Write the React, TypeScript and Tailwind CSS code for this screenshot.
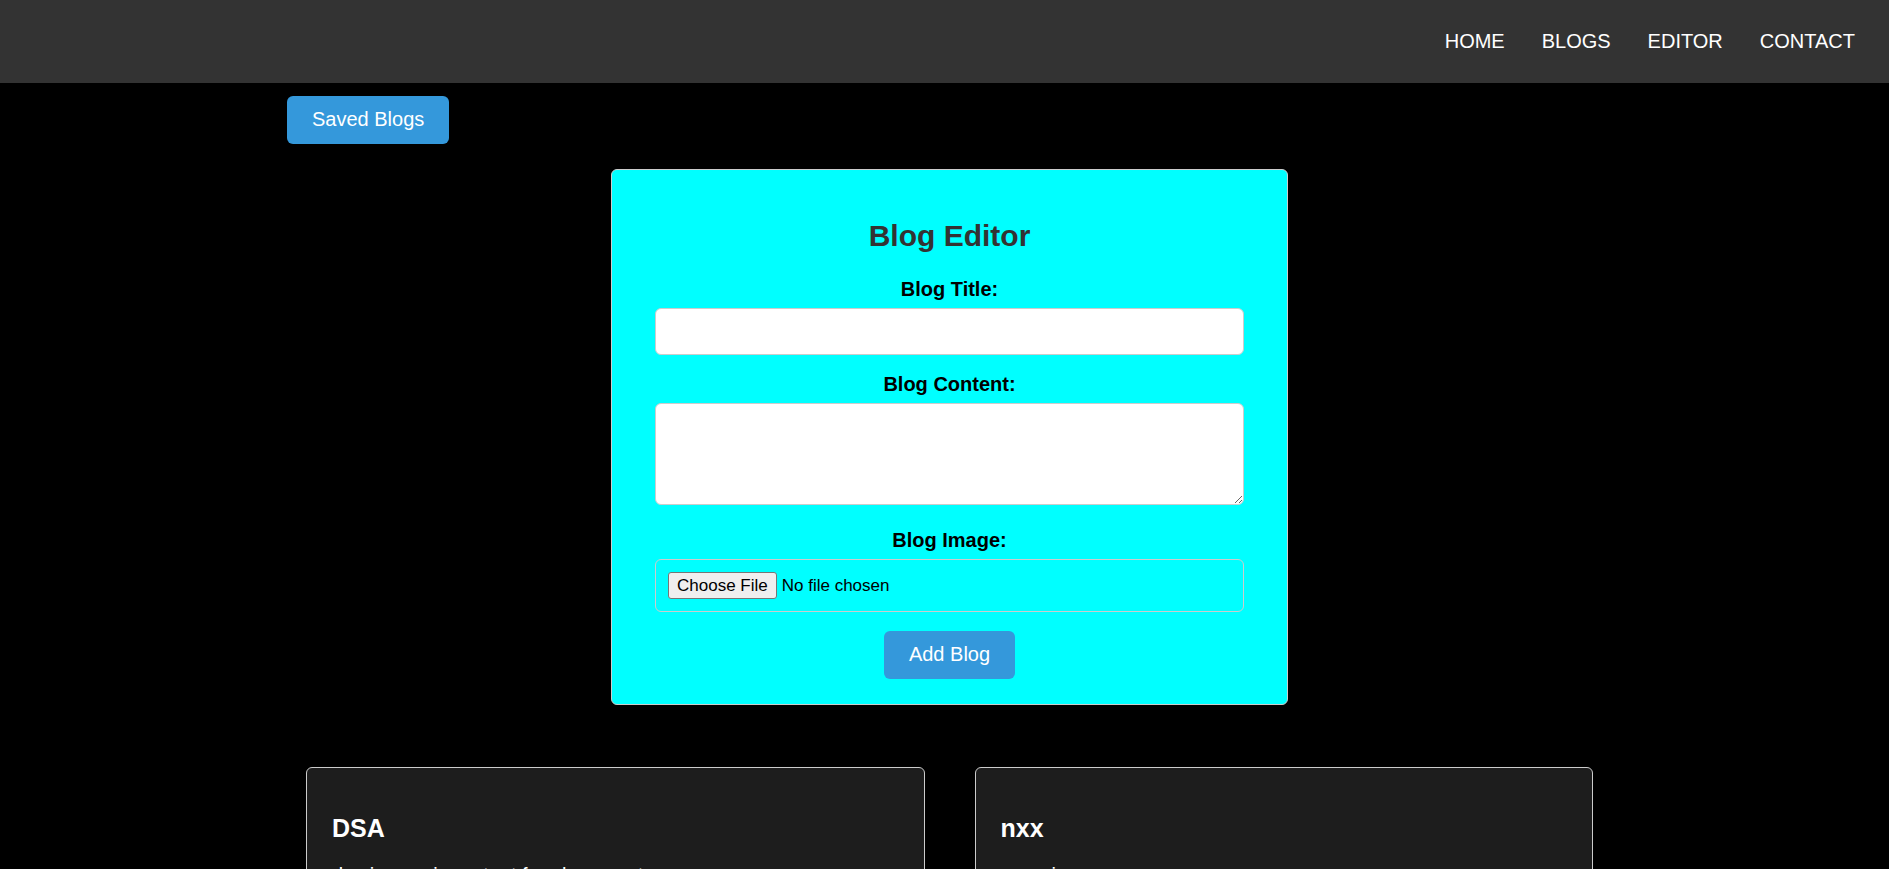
const navLinks = ["HOME", "BLOGS", "EDITOR", "CONTACT"];

const posts = [
  { title: "DSA", text: "dsa is very important for placement" },
  { title: "nxx", text: "nxxxxj" },
];

const labelStyle = "mb-[7px] block text-center text-[20px] leading-[23px] font-bold";
const fieldStyle = "block w-full rounded-md border border-[#cccccc] px-3 text-[17px] text-black";
const buttonStyle =
  "cursor-pointer rounded-md bg-[#3498db] px-[25px] pt-3 pb-[13px] text-[20px] leading-[23px] text-white hover:bg-[#2980b9]";

function NavBar() {
  return (
    <nav className="bg-[#333333] py-[30px] pr-[34px] pl-6">
      <ul className="flex flex-wrap justify-end gap-x-[37px]">
        {navLinks.map((name) => (
          <li key={name}>
            <a href={"#" + name.toLowerCase()} className="block text-[20px] leading-[23px] text-white">
              {name}
            </a>
          </li>
        ))}
      </ul>
    </nav>
  );
}

function BlogForm() {
  return (
    <form
      id="editor"
      onSubmit={(e) => e.preventDefault()}
      className="mx-auto mt-[25px] w-full max-w-[677px] rounded-md border border-[#cccccc] bg-[#00ffff] px-[43px] pt-12 pb-[25px] text-black"
    >
      <h2 className="mb-[25px] text-center text-[30px] leading-[35px] font-bold text-[#333333]">Blog Editor</h2>

      <label htmlFor="title" className={labelStyle}>
        Blog Title:
      </label>
      <input id="title" type="text" className={fieldStyle + " mb-[18px] bg-white py-3 leading-[21px]"} />

      <label htmlFor="content" className={labelStyle}>
        Blog Content:
      </label>
      <textarea id="content" rows={4} className={fieldStyle + " mb-6 resize bg-white py-3 leading-[19px]"} />

      <label htmlFor="image" className={labelStyle}>
        Blog Image:
      </label>
      <input
        id="image"
        type="file"
        className={
          fieldStyle +
          " mb-[19px] py-3 leading-[23px] file:mr-[5px] file:rounded-[3px] file:border file:border-solid file:border-[#767676] file:bg-[#efefef] file:px-2 file:py-px file:text-[17px] file:leading-[23px] file:text-black"
        }
      />

      <div className="text-center">
        <button type="submit" className={buttonStyle}>
          Add Blog
        </button>
      </div>
    </form>
  );
}

function PostCard({ title, text }: { title: string; text: string }) {
  return (
    <article className="rounded-md border border-[#cccccc] bg-[#1d1d1d] px-[25px] pt-[46px] pb-[25px]">
      <h3 className="mb-[21px] text-[25px] leading-[29px] font-bold">{title}</h3>
      <p className="text-[20px] leading-[23px]">{text}</p>
    </article>
  );
}

export default function App() {
  return (
    <div className="min-h-screen bg-black font-['Liberation_Sans',Arial,sans-serif] text-white">
      <NavBar />
      <main className="pt-[13px] pl-[10px]">
        <div className="mx-auto max-w-[1325px]">
          <button type="button" className={buttonStyle + " block"}>
            Saved Blogs
          </button>
          <BlogForm />
          <section id="blogs" className="mt-[62px] grid grid-cols-1 gap-[50px] px-[19px] md:grid-cols-2">
            {posts.map((post) => (
              <PostCard key={post.title} title={post.title} text={post.text} />
            ))}
          </section>
        </div>
      </main>
    </div>
  );
}
